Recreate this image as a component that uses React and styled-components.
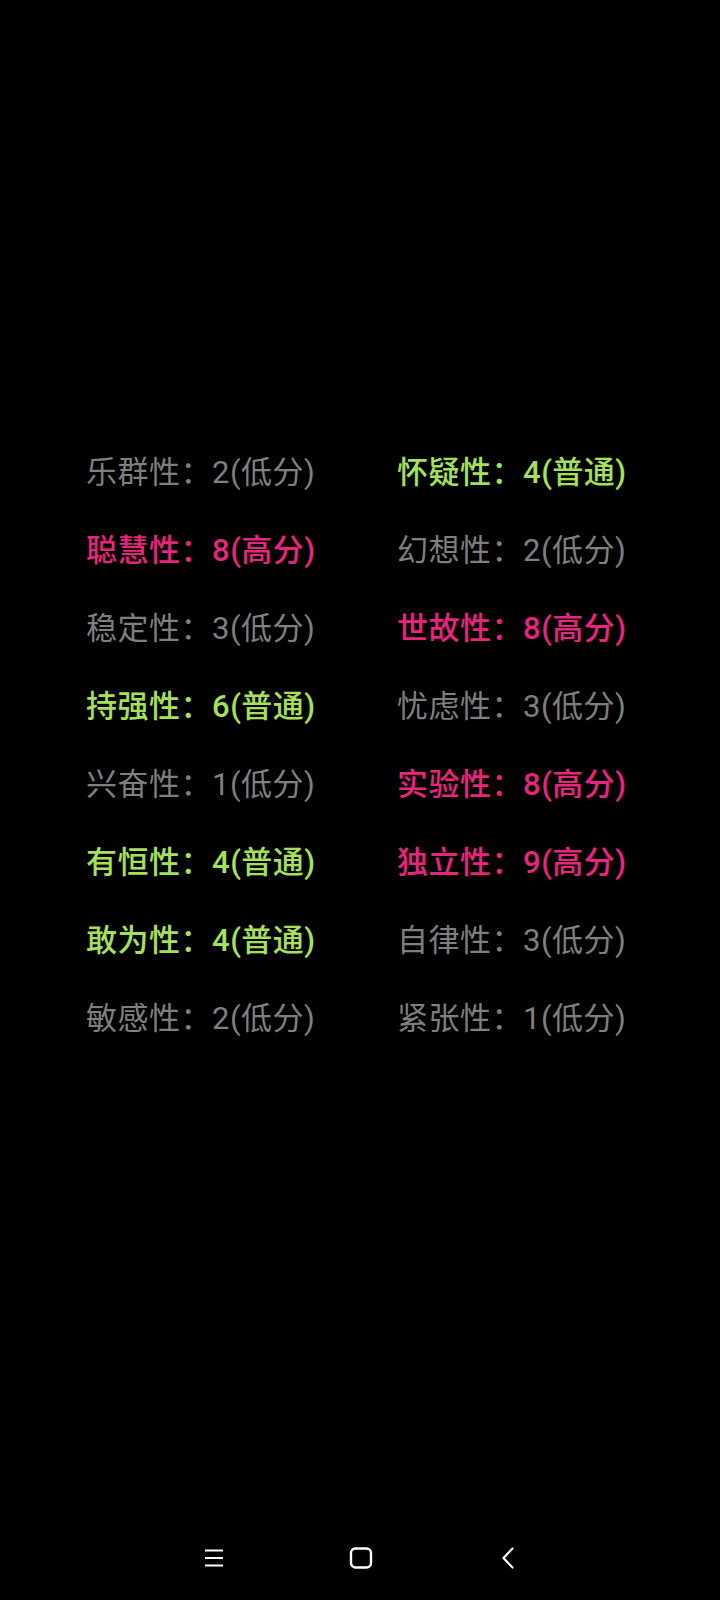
import React from "react";
import styled, { createGlobalStyle } from "styled-components";

const GlobalStyle = createGlobalStyle`
  html, body {
    margin: 0;
    padding: 0;
    background: #000;
  }
  body {
    font-family: "Roboto", "Noto Sans CJK SC", "Noto Sans", sans-serif;
  }
`;

const Page = styled.div`
  width: 720px;
  height: 1600px;
  display: flex;
  flex-direction: column;
  background: #000;
`;

const Grid = styled.div`
  margin-top: 434px;
  padding-left: 86px;
  display: grid;
  grid-template-columns: 311px 1fr;
  grid-auto-rows: 78px;
`;

const COLORS = {
  low: "#7f7f7f",
  mid: "#a4e05a",
  high: "#e8247e",
};

const Item = styled.div`
  font-size: 31px;
  letter-spacing: 0.5px;
  line-height: 78px;
  white-space: nowrap;
  color: ${(p) => COLORS[p.level]};
  font-weight: ${(p) => (p.level === "low" ? 400 : 500)};
`;

const NavBar = styled.div`
  margin-top: auto;
  height: 54px;
  display: flex;
  align-items: flex-start;
  justify-content: center;
`;

const NavRow = styled.div`
  display: flex;
  align-items: center;
  height: 24px;
  width: 318px;
  justify-content: space-between;
  margin-left: 2px;
`;

const NavBtn = styled.div`
  width: 24px;
  height: 24px;
  display: flex;
  align-items: center;
  justify-content: center;
`;

const data = [
  ["乐群性", 2, "low"],
  ["怀疑性", 4, "mid"],
  ["聪慧性", 8, "high"],
  ["幻想性", 2, "low"],
  ["稳定性", 3, "low"],
  ["世故性", 8, "high"],
  ["持强性", 6, "mid"],
  ["忧虑性", 3, "low"],
  ["兴奋性", 1, "low"],
  ["实验性", 8, "high"],
  ["有恒性", 4, "mid"],
  ["独立性", 9, "high"],
  ["敢为性", 4, "mid"],
  ["自律性", 3, "low"],
  ["敏感性", 2, "low"],
  ["紧张性", 1, "low"],
];

const label = { low: "低分", mid: "普通", high: "高分" };

export default function App() {
  return (
    <Page>
      <GlobalStyle />
      <Grid>
        {data.map(([name, score, level], i) => (
          <Item key={i} level={level}>
            {name}：{score}({label[level]})
          </Item>
        ))}
      </Grid>
      <NavBar>
        <NavRow>
          <NavBtn>
            <svg width="22" height="20" viewBox="0 0 22 20">
              <path d="M2 2.5h18M2 10h18M2 17.5h18" stroke="#fff" strokeWidth="2.2" fill="none" />
            </svg>
          </NavBtn>
          <NavBtn>
            <svg width="24" height="22" viewBox="0 0 24 22">
              <rect x="2" y="1.5" width="20" height="19" rx="4.5" stroke="#fff" strokeWidth="2.4" fill="none" />
            </svg>
          </NavBtn>
          <NavBtn>
            <svg width="14" height="22" viewBox="0 0 14 22">
              <path d="M11.5 1.5L2.5 11l9 9.5" stroke="#fff" strokeWidth="2.2" fill="none" strokeLinecap="round" strokeLinejoin="round" />
            </svg>
          </NavBtn>
        </NavRow>
      </NavBar>
    </Page>
  );
}
